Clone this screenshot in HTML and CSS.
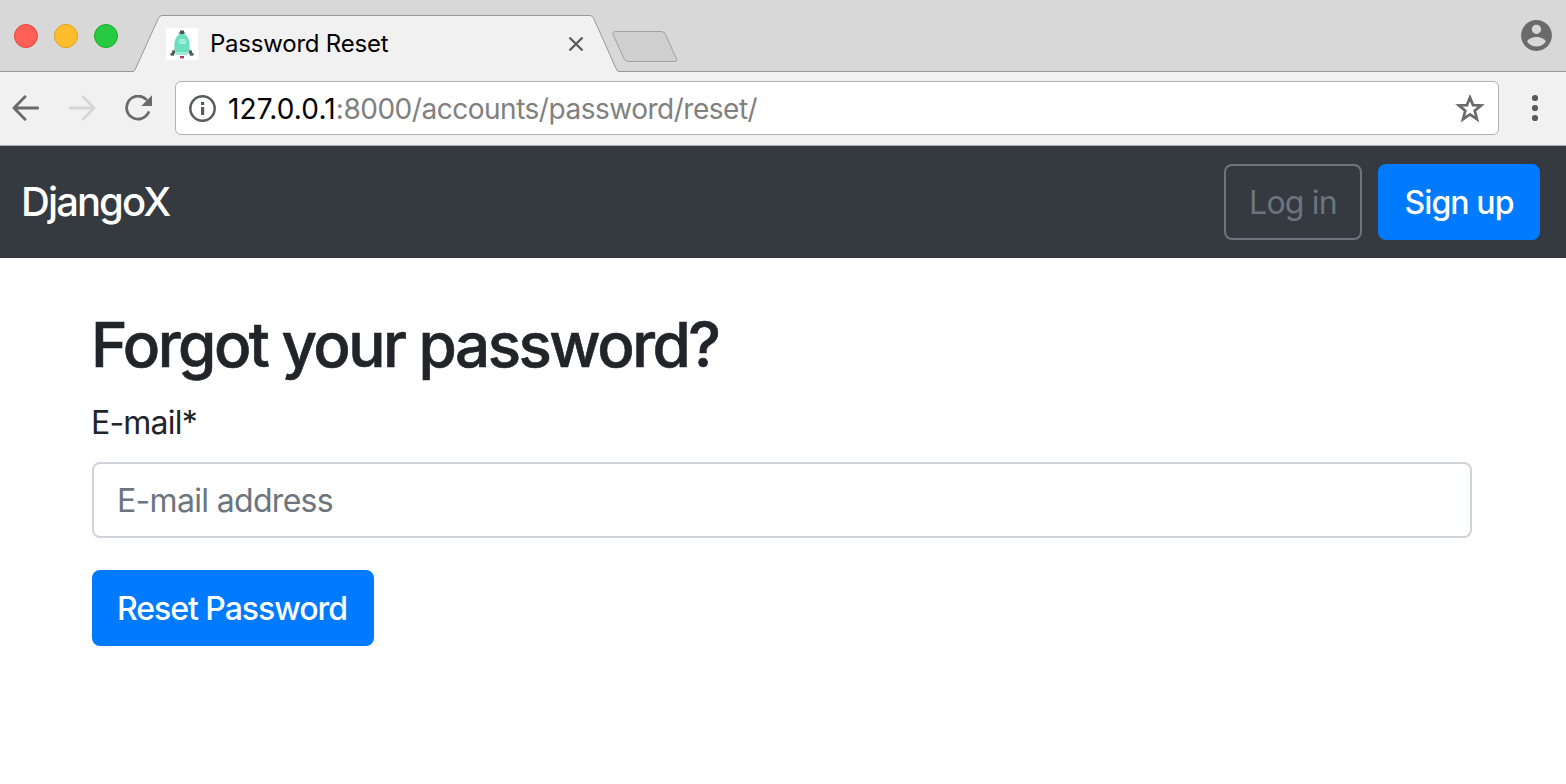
FILE: index.html
```html
<!DOCTYPE html>
<html lang="en">
<head>
<meta charset="utf-8">
<title>Password Reset</title>
<link rel="stylesheet" href="styles.css">
</head>
<body>
<div class="tabstrip">
  <div class="lights">
    <span class="light light-red"></span>
    <span class="light light-yellow"></span>
    <span class="light light-green"></span>
  </div>
  <div class="tab">
    <svg class="tab-shape" width="486" height="57" viewBox="0 0 486 57">
      <path d="M0 56.5Q1.500 56.200 2.200 54.500L25.500 3Q26.800 .5 29 .5H457Q459.200 .5 460.500 3L483.500 54.500Q484.500 56.500 486 56.500V57H0Z" fill="#f1f1f1"/>
      <path d="M0 56.500Q1.500 56.200 2.200 54.500L25.500 3Q26.800 .5 29 .5H457Q459.200 .5 460.500 3L483.500 54.500Q484.500 56.500 486 56.500" fill="none" stroke="#979797"/>
    </svg>
    <svg class="favicon" width="32" height="32" viewBox="0 0 32 32">
      <rect width="32" height="32" fill="#fff"/>
      <path d="M8.500 20L5 25.500V28H8L10 25zM23.500 20L27 25.500V28H24L22 25z" fill="#c3cecb"/>
      <path d="M16 4.500C11 6.500 8.300 11.500 8.300 17C8.300 21 9.300 24.500 11 27H21C22.700 24.500 23.700 21 23.700 17C23.700 11.500 21 6.500 16 4.500Z" fill="#6bdfbd"/>
      <path d="M9.700 24H22.300L21 27H11Z" fill="#9aebd2"/>
      <path d="M14 2.500h4v3.500h-4z" fill="#465452"/>
      <path d="M12.500 4h1.500v2h-1.500zM18 4h1.500v2H18z" fill="#a9b8b4"/>
      <rect x="13" y="11" width="7" height="5" rx="1.500" fill="#a4f1dd"/>
      <path d="M14.500 12.500h1v1.500h-1zM17.500 12.500h1v1.500h-1z" fill="#7ad6bd"/>
      <path d="M6 22.500h3v3H8v2H4.500V25H6zM26 22.500h-3v3h1v2h3.500V25H26z" fill="#4d5c5a"/>
      <path d="M14 28h4v2h-4z" fill="#b8365c"/>
      <path d="M14 30h4v1h-4z" fill="#e6b7c6"/>
    </svg>
    <span class="tab-title">Password Reset</span>
    <svg class="tab-close" width="16" height="16" viewBox="0 0 16 16"><path d="M1.500 1.500l13 13M14.500 1.500l-13 13" stroke="#5a5b5d" stroke-width="2.300"/></svg>
  </div>
  <svg class="new-tab" width="67" height="33" viewBox="0 0 67 33">
    <path d="M4 .5H49.500Q52 .5 53.300 3L64.300 27.500Q65.800 30.500 62.500 30.500H16.500Q13.500 30.500 12 27.500L1.200 4Q.3 .5 4 .5Z" fill="#cfcfcf" stroke="#a0a0a0"/>
  </svg>
  <svg class="avatar" width="37" height="37" viewBox="0 0 24 24"><path fill="#6a6a6a" d="M12 2C6.480 2 2 6.480 2 12s4.480 10 10 10 10-4.480 10-10S17.520 2 12 2zm0 3c1.660 0 3 1.340 3 3s-1.340 3-3 3-3-1.340-3-3 1.340-3 3-3zm0 14.200c-2.500 0-4.710-1.280-6-3.220.03-1.990 4-3.080 6-3.080 1.990 0 5.970 1.090 6 3.080-1.290 1.940-3.500 3.220-6 3.220z"/></svg>
</div>
<div class="toolbar">
  <svg class="nav-icon" width="28" height="26" viewBox="0 0 28 26"><path d="M13 1.800L2 13L13 24.200M2 13H25.700" fill="none" stroke="#6a6a6a" stroke-width="2.800" stroke-linecap="round" stroke-linejoin="round"/></svg>
  <svg class="nav-icon" width="28" height="26" viewBox="0 0 28 26"><path d="M15 1.800L26 13L15 24.200M26 13H2.300" fill="none" stroke="#d6d6d6" stroke-width="2.800" stroke-linecap="round" stroke-linejoin="round"/></svg>
  <svg class="nav-icon" width="28" height="26" viewBox="0 0 28 26"><path d="M22 4.200A11.500 11.500 0 1 0 24.500 17.500" fill="none" stroke="#6a6a6a" stroke-width="2.800" stroke-linecap="round"/><path d="M28 .3V11H17.300Z" fill="#6a6a6a"/></svg>
  <div class="address">
    <svg class="info" width="27" height="27" viewBox="0 0 27 27"><circle cx="13.500" cy="13.500" r="12.200" fill="none" stroke="#5a5b5d" stroke-width="2.500"/><path d="M12 7h3.200v3H12zM12 12h3.200v8H12z" fill="#5a5b5d"/></svg>
    <span class="url"><span class="host">127.0.0.1</span><span class="path">:8000/accounts/password/reset/</span></span>
    <svg class="star" width="30" height="29" viewBox="0 0 30 29"><path d="M15 3.500L18 11.100L26.200 11.400L19.700 16.700L22 25.200L15 20.400L8 25.200L10.300 16.700L3.800 11.400L12 11.100Z" fill="none" stroke="#6a6a6a" stroke-width="2.700"/></svg>
  </div>
  <svg class="menu" width="8" height="28" viewBox="0 0 8 28"><g fill="#5a5b5d"><circle cx="4" cy="4" r="3.100"/><circle cx="4" cy="14" r="3.100"/><circle cx="4" cy="24" r="3.100"/></g></svg>
</div>
<nav class="navbar">
  <a class="brand">DjangoX</a>
  <a class="btn btn-outline">Log in</a>
  <a class="btn btn-primary signup">Sign up</a>
</nav>
<main class="content">
  <h2 class="heading">Forgot your password?</h2>
  <form class="form">
    <label class="label" for="email">E-mail*</label>
    <input class="field" id="email" type="email" placeholder="E-mail address">
    <button class="btn btn-primary reset" type="button">Reset Password</button>
  </form>
</main>
</body>
</html>
```

FILE: styles.css
```css
* { box-sizing: border-box; }
body {
  margin: 0;
  height: 784px;
  overflow: hidden;
  background: #fff;
  color: #212529;
  font-family: Inter, "Liberation Sans", sans-serif;
}
svg { display: block; flex: none; }
.tabstrip {
  display: flex;
  height: 72px;
  background: #d8d8d8;
  box-shadow: inset 0 -1px #979797;
}
.lights {
  display: flex;
  gap: 16px;
  width: 133px;
  padding: 24px 0 0 14px;
}
.light { width: 24px; height: 24px; border-radius: 50%; border: 1px solid; }
.light-red { background: #ff5f57; border-color: #e2463f; }
.light-yellow { background: #ffbd2e; border-color: #e1a116; }
.light-green { background: #28ca42; border-color: #12ac28; }
.tab {
  position: relative;
  display: flex;
  align-items: center;
  width: 486px;
  height: 57px;
  margin-top: 15px;
  padding: 0 43px 0 33px;
}
.tab-shape { position: absolute; left: 0; top: 0; }
.favicon, .tab-title, .tab-close { position: relative; }
.tab-title { flex: 1; margin-left: 12px; font-size: 24px; line-height: 30px; letter-spacing: -0.22px; color: #000; }
.tab-close { margin-right: -8px; }
.new-tab { margin: 31px 0 0 -7px; }
.avatar { margin: 17px 11px 0 auto; }
.toolbar {
  display: flex;
  align-items: center;
  height: 74px;
  background: #f1f1f1;
  border-bottom: 1px solid #a9afb0;
  padding: 0 27px 2px 12px;
}
.nav-icon { margin-right: 28px; }
.address {
  display: flex;
  align-items: center;
  width: 1324px;
  height: 54px;
  margin-left: -5px;
  padding: 1px 13px 0;
  background: #fff;
  border: 1px solid #b3b3b3;
  border-radius: 6px;
}
.url { flex: 1; margin-left: 12px; padding-top: 2px; font-size: 28px; line-height: 36px; white-space: nowrap; }
.host { color: #000; letter-spacing: 0.15px; }
.path { color: #808080; letter-spacing: -0.48px; }
.menu { margin-left: auto; }
.navbar {
  display: flex;
  align-items: center;
  height: 112px;
  padding: 0 26px 0 21px;
  background: #343a40;
}
.brand { flex: 1; color: #fff; font-size: 40px; font-weight: 500; line-height: 60px; letter-spacing: -1.9px; }
.btn {
  display: flex;
  align-items: center;
  justify-content: center;
  height: 76px;
  padding: 2px 0 0;
  border: 2px solid;
  border-radius: 8px;
  font-family: inherit;
  font-size: 32px;
  line-height: 48px;
  white-space: nowrap;
}
.btn-outline { width: 138px; margin-right: 16px; color: #6c757d; border-color: #6c757d; letter-spacing: -0.8px; }
.btn-primary { color: #fff; background: #007bff; border-color: #007bff; font-weight: 500; }
.signup { width: 162px; letter-spacing: -0.9px; }
.content { padding: 49px 94px 0 91px; }
.heading { margin: 0; font-size: 62px; font-weight: 500; line-height: 76px; letter-spacing: -2.52px; -webkit-text-stroke: 0.6px; }
.form { display: flex; flex-direction: column; align-items: flex-start; margin-top: 16px; }
.label { font-size: 32px; line-height: 48px; letter-spacing: -0.8px; }
.field {
  width: 1380px;
  height: 76px;
  margin: 15px 0 32px 1px;
  padding: 0 23px;
  border: 2px solid #ced4da;
  border-radius: 8px;
  background: #fff;
  font: 32px Inter, "Liberation Sans", sans-serif;
  letter-spacing: -0.68px;
}
.field::placeholder { color: #6c757d; opacity: 1; }
.reset { width: 282px; margin-left: 1px; padding-right: 2px; letter-spacing: -1.05px; }
```
